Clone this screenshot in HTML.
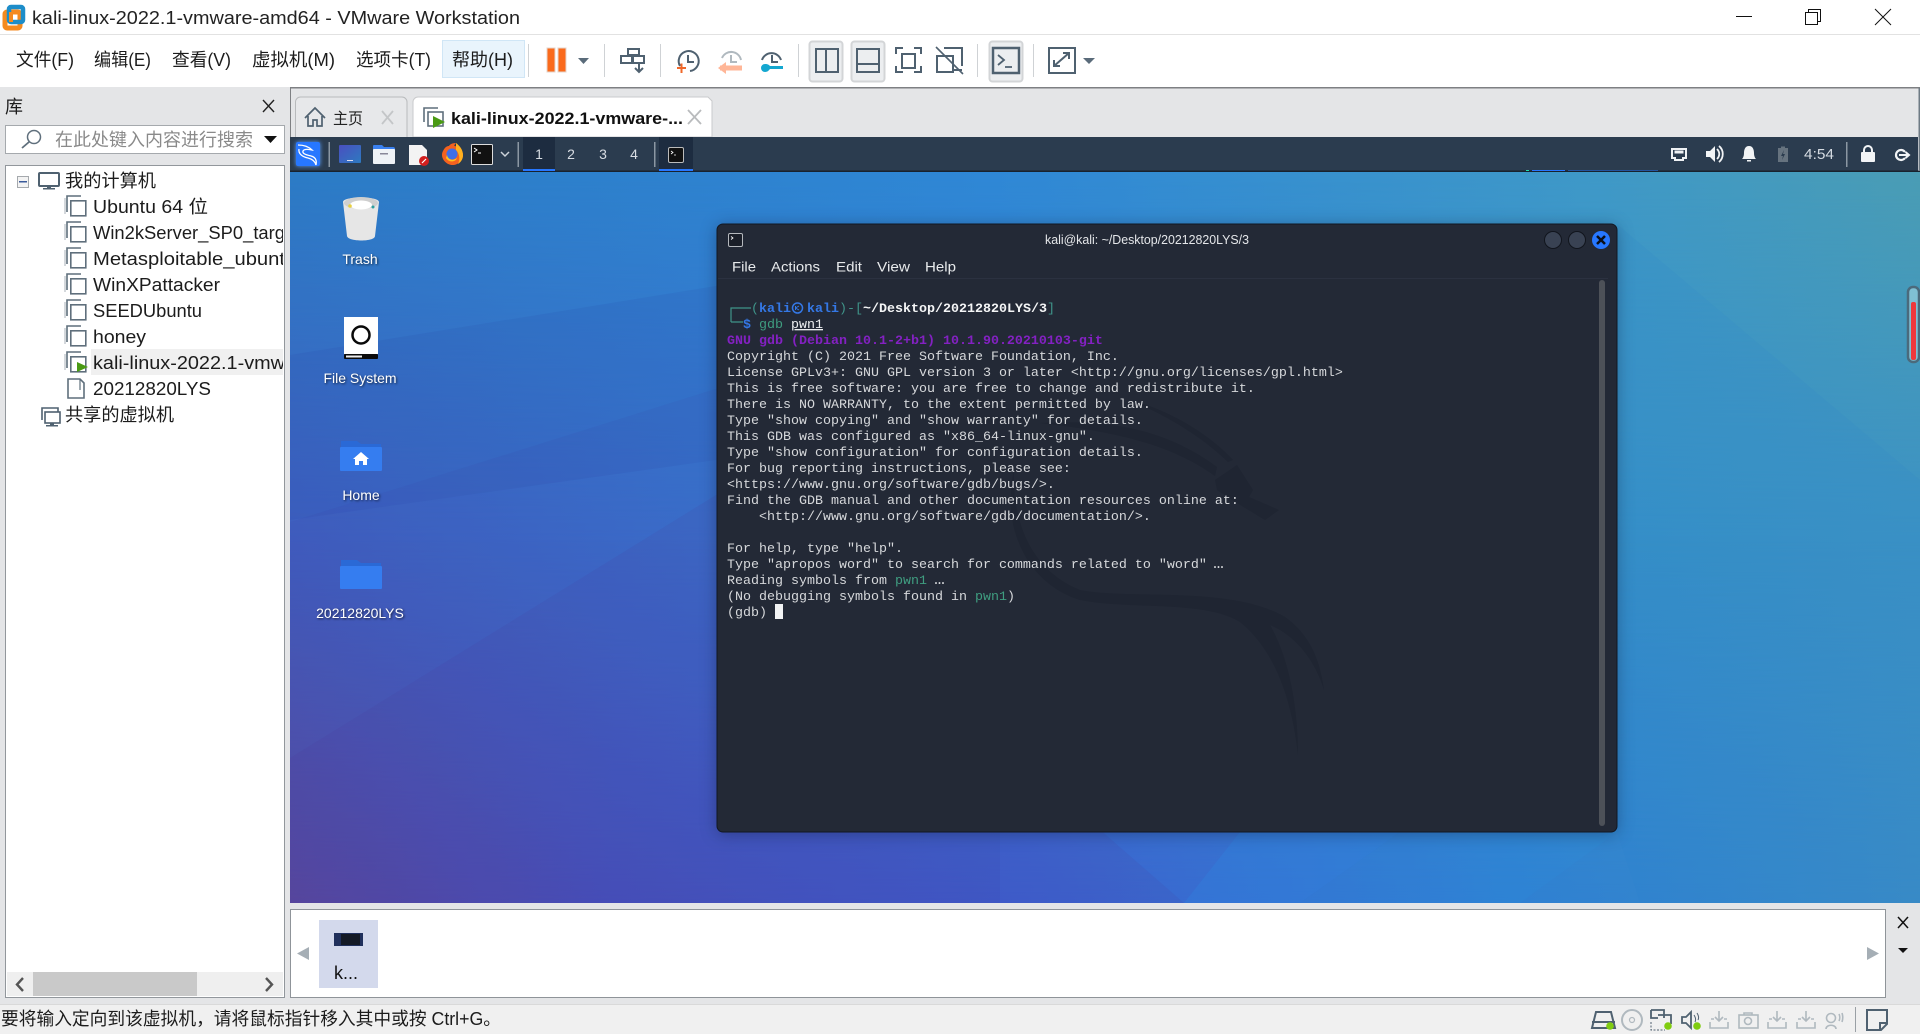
<!DOCTYPE html>
<html><head><meta charset="utf-8"><title>kali-linux-2022.1-vmware-amd64 - VMware Workstation</title>
<style>
html,body{margin:0;padding:0;background:#fff;width:1920px;height:1034px;overflow:hidden}
svg{display:block}
text{font-family:"Liberation Sans","Noto Sans CJK SC",sans-serif;white-space:pre}
.ui{font-size:18px;fill:#1c1c1c}
.t{font-family:"Liberation Mono","DejaVu Sans Mono",monospace;font-size:13.33px;fill:#d6d8db}
.d{font-size:14px;fill:#fff;text-anchor:middle;filter:drop-shadow(1px 1px 1px rgba(0,0,0,.65))}
.i{fill:none;stroke:#4f6170;stroke-width:2}
.g{fill:none;stroke:#b0b9bf;stroke-width:2}
</style></head><body>
<svg width="1920" height="1034" viewBox="0 0 1920 1034" xmlns="http://www.w3.org/2000/svg">
<defs>
<linearGradient id="r1" gradientUnits="userSpaceOnUse" x1="290" y1="0" x2="1920" y2="0"><stop offset="0" stop-color="#2c7cc6"/><stop offset=".43" stop-color="#2f88d6"/><stop offset=".8" stop-color="#3f99c8"/><stop offset="1" stop-color="#4a9db5"/></linearGradient>
<linearGradient id="r2" gradientUnits="userSpaceOnUse" x1="290" y1="0" x2="1920" y2="0"><stop offset="0" stop-color="#3f5fc0"/><stop offset=".25" stop-color="#3a70cc"/><stop offset=".8" stop-color="#3690c8"/><stop offset="1" stop-color="#3c92c4"/></linearGradient>
<linearGradient id="r3" gradientUnits="userSpaceOnUse" x1="290" y1="0" x2="1920" y2="0"><stop offset="0" stop-color="#594a9f"/><stop offset=".2" stop-color="#4654bf"/><stop offset=".45" stop-color="#3d60cf"/><stop offset=".75" stop-color="#2f80d2"/><stop offset="1" stop-color="#3a8cc6"/></linearGradient>
<linearGradient id="m2" gradientUnits="userSpaceOnUse" x1="0" y1="171" x2="0" y2="540"><stop offset="0" stop-color="#000"/><stop offset="1" stop-color="#fff"/></linearGradient>
<linearGradient id="m3" gradientUnits="userSpaceOnUse" x1="0" y1="540" x2="0" y2="903"><stop offset="0" stop-color="#000"/><stop offset="1" stop-color="#fff"/></linearGradient>
<mask id="mk2"><rect x="290" y="171" width="1630" height="732" fill="url(#m2)"/></mask>
<mask id="mk3"><rect x="290" y="171" width="1630" height="732" fill="url(#m3)"/></mask>
<linearGradient id="wk" x1="0" y1="0" x2="1" y2="1"><stop offset="0" stop-color="#4a4fc0"/><stop offset="1" stop-color="#2d7ac0"/></linearGradient>
<clipPath id="treeclip"><rect x="6" y="166" width="277" height="806"/></clipPath>
<clipPath id="vmclip"><rect x="290" y="171" width="1630" height="732"/></clipPath>
<g id="vm"><path d="M67 212V196H81" fill="none" stroke="#5f6f7c" stroke-width="1.6"/><path d="M65 214V198" fill="none" stroke="#a9b2b9" stroke-width="1"/><rect x="70.8" y="200.8" width="15" height="15" fill="#fff" stroke="#5f6f7c" stroke-width="1.6"/></g>
</defs>

<rect width="1920" height="1034" fill="#fff"/>

<!-- title bar -->
<rect x="5" y="12" width="15" height="16" rx="2" fill="none" stroke="#f58a1f" stroke-width="5"/>
<rect x="9" y="7" width="14" height="15" rx="2" fill="none" stroke="#1d8dc9" stroke-width="4.5"/>
<rect x="9" y="12" width="4" height="10" fill="#f58a1f"/>
<text x="32" y="24" style="font-size:18.5px;fill:#222" textLength="488" lengthAdjust="spacingAndGlyphs">kali-linux-2022.1-vmware-amd64 - VMware Workstation</text>
<rect x="1736" y="16" width="16" height="1" fill="#111"/>
<path d="M1808.5 12.500V9.500H1820.500V21.500H1817.500" fill="none" stroke="#111"/><rect x="1805.500" y="12.500" width="12" height="12" fill="none" stroke="#111"/>
<path d="M1875 9L1891 25M1891 9L1875 25" stroke="#111" fill="none"/>
<rect x="0" y="34" width="1920" height="1" fill="#e2e2e2"/>

<!-- menu -->
<rect x="442.500" y="40.500" width="82" height="37" fill="#e9f4fc" stroke="#d0e6f6"/>
<text class="ui" x="16" y="66" textLength="58" lengthAdjust="spacingAndGlyphs">文件(F)</text>
<text class="ui" x="94" y="66" textLength="57" lengthAdjust="spacingAndGlyphs">编辑(E)</text>
<text class="ui" x="172" y="66" textLength="59" lengthAdjust="spacingAndGlyphs">查看(V)</text>
<text class="ui" x="252" y="66" textLength="83" lengthAdjust="spacingAndGlyphs">虚拟机(M)</text>
<text class="ui" x="356" y="66" textLength="75" lengthAdjust="spacingAndGlyphs">选项卡(T)</text>
<text class="ui" x="452" y="66" textLength="61" lengthAdjust="spacingAndGlyphs">帮助(H)</text>

<!-- toolbar -->
<g fill="#cfd2d5"><rect x="528" y="44" width="1" height="33"/><rect x="604" y="44" width="1" height="33"/><rect x="660" y="44" width="1" height="33"/><rect x="798" y="44" width="1" height="33"/><rect x="977" y="44" width="1" height="33"/><rect x="1033" y="44" width="1" height="33"/></g>
<rect x="547" y="48" width="8" height="24" fill="#fa6a1c" stroke="#e4d5cc"/><rect x="558" y="48" width="8" height="24" fill="#fa6a1c" stroke="#e4d5cc"/>
<path d="M578 58H589L583.500 64Z" fill="#5a6b7a"/>
<g class="i"><rect x="628" y="49" width="11" height="6"/><rect x="621" y="56" width="11" height="7"/><rect x="633" y="56" width="11" height="7"/><path d="M639 63V72M635 68L639 72L643 68"/></g>
<g><path d="M680 66A10 10 0 1 1 690 71" class="i"/><path d="M688 55V62H694" class="i"/><path d="M677 68H686M681.500 63.500V73" stroke="#f0682a" stroke-width="2" fill="none"/></g>
<g><path d="M722 58A10 10 0 0 1 741 60" class="g"/><path d="M731 55V62H737" class="g"/><path d="M720 68H742" stroke="#ffb697" stroke-width="5" fill="none"/><path d="M718 68L726 62V74Z" fill="#ffb697"/></g>
<g><path d="M762 60A10 10 0 0 1 781 60" class="i"/><path d="M772 55V62H778" class="i"/><path d="M765 64a4 4 0 0 0 0 8c3 0 4-2 5-3h13v-3h-13c-1-1-2-2-5-2z" fill="#14a7d0"/></g>
<rect x="809.500" y="41.500" width="33" height="40" rx="3" fill="#eceef0" stroke="#d3d5d7" stroke-width="2"/>
<rect x="851.500" y="41.500" width="33" height="40" rx="3" fill="#eceef0" stroke="#d3d5d7" stroke-width="2"/>
<rect x="989.500" y="41.500" width="33" height="40" rx="3" fill="#eceef0" stroke="#d3d5d7" stroke-width="2"/>
<g class="i"><rect x="816" y="49" width="22" height="23"/><path d="M826 49V72"/><rect x="857" y="49" width="22" height="23"/><path d="M857 64H879"/>
<path d="M896 54V48H903M914 48H921V54M921 66V72H914M903 72H896V66"/><rect x="902" y="54" width="13" height="14"/>
<path d="M944 48H962V66M962 70H952M944 48M937 56H953V72H937Z"/><rect x="993" y="48" width="26" height="25" stroke-width="2.500"/><path d="M998 55L1004 60L998 65M1005 67H1012" stroke-width="1.800"/>
<path d="M1054 48H1075V73H1049V48H1054M1054 66L1069 53M1063 53H1069V59M1054 60V66H1060" stroke-width="2"/></g>
<path d="M936 47L963 74" stroke="#4f6170" stroke-width="1.600"/>
<path d="M1083 58H1095L1089 64Z" fill="#5a6b7a"/>

<!-- left panel -->
<rect x="0" y="87" width="290" height="917" fill="#e4e5e7"/>
<text class="ui" x="5" y="113">库</text>
<path d="M263 100L274 112M274 100L263 112" stroke="#222" stroke-width="1.400"/>
<rect x="5.500" y="125.500" width="279" height="28" fill="#fff" stroke="#a5a9ad"/>
<circle cx="34" cy="137" r="6.500" fill="none" stroke="#5f6f7c" stroke-width="1.500"/><path d="M29 142L22 148" stroke="#5f6f7c" stroke-width="1.800"/>
<text x="55" y="146" style="font-size:18px;fill:#8a8a8a" textLength="198" lengthAdjust="spacingAndGlyphs">在此处键入内容进行搜索</text>
<path d="M264 136H277L270.500 143Z" fill="#111"/>
<rect x="5.500" y="165.500" width="279" height="832" fill="#fff" stroke="#92979c"/>
<rect x="17.500" y="176.500" width="11" height="11" fill="#f3f3f3" stroke="#a5a9ad"/><rect x="19" y="181" width="8" height="1.500" fill="#3a5a9a"/>
<g class="i"><rect x="39" y="173" width="20" height="13" rx="1"/></g><rect x="47" y="186" width="4" height="3" fill="#4f6170"/><rect x="43" y="188" width="12" height="1.500" fill="#4f6170"/>
<text class="ui" x="65" y="187" textLength="91" lengthAdjust="spacingAndGlyphs">我的计算机</text>
<rect x="91" y="349" width="192" height="26" fill="#f0f0f0"/>
<use href="#vm"/><use href="#vm" y="26"/><use href="#vm" y="52"/><use href="#vm" y="78"/><use href="#vm" y="104"/><use href="#vm" y="130"/><use href="#vm" y="156"/>
<path d="M77 362L88 367L77 372Z" fill="#4a9a14"/>
<path d="M68 379H80L84 383V398H68Z" fill="#fff" stroke="#5f6f7c" stroke-width="1.600"/><path d="M80 379V390" stroke="#5f6f7c" stroke-width="1.200"/>
<g clip-path="url(#treeclip)">
<text class="ui" x="93" y="213" textLength="115" lengthAdjust="spacingAndGlyphs">Ubuntu 64 位</text>
<text class="ui" x="93" y="239" textLength="192" lengthAdjust="spacingAndGlyphs">Win2kServer_SP0_targ</text>
<text class="ui" x="93" y="265" textLength="192" lengthAdjust="spacingAndGlyphs">Metasploitable_ubunt</text>
<text class="ui" x="93" y="291" textLength="127" lengthAdjust="spacingAndGlyphs">WinXPattacker</text>
<text class="ui" x="93" y="317" textLength="109" lengthAdjust="spacingAndGlyphs">SEEDUbuntu</text>
<text class="ui" x="93" y="343" textLength="53" lengthAdjust="spacingAndGlyphs">honey</text>
<text class="ui" x="93" y="369" textLength="192" lengthAdjust="spacingAndGlyphs">kali-linux-2022.1-vmw</text>
<text class="ui" x="93" y="395" textLength="118" lengthAdjust="spacingAndGlyphs">20212820LYS</text>
</g>
<g class="i"><path d="M42 420V408H58V412" stroke-width="1.600"/><rect x="45" y="412" width="15" height="11" stroke-width="1.600"/></g><rect x="50" y="423" width="4" height="3" fill="#4f6170"/><rect x="46" y="425" width="12" height="1.500" fill="#4f6170"/>
<text class="ui" x="65" y="421" textLength="109" lengthAdjust="spacingAndGlyphs">共享的虚拟机</text>
<rect x="7" y="972" width="276" height="24" fill="#efefef"/><rect x="33" y="972" width="164" height="24" fill="#c9c9c9"/>
<path d="M23 978L17 984.500L23 991" fill="none" stroke="#555" stroke-width="2.400"/><path d="M266 978L272 984.500L266 991" fill="none" stroke="#555" stroke-width="2.400"/>

<!-- tabs area -->
<rect x="290" y="87" width="1630" height="50" fill="#e4e5e7"/>
<rect x="290" y="87" width="1630" height="1.500" fill="#7e8083"/><rect x="290" y="87" width="1" height="50" fill="#7e8083"/>
<path d="M295.500 137V102a5 5 0 0 1 5-5H402a5 5 0 0 1 5 5V137" fill="#e7e8ea" stroke="#b8babc"/>
<path d="M305 118L315 108L325 118M308 116V126H313V120H317V126H322V116" fill="none" stroke="#4f6170" stroke-width="1.700"/>
<text x="333" y="124" style="font-size:16px;fill:#222" textLength="30" lengthAdjust="spacingAndGlyphs">主页</text>
<path d="M382 111L393 124M393 111L382 124" stroke="#c4c6c8" stroke-width="1.800"/>
<path d="M413 137V102a5 5 0 0 1 5-5H708l4 4V137Z" fill="#fff" stroke="#c9cacc"/>
<path d="M424 122V108H438" fill="none" stroke="#5f6f7c" stroke-width="1.600"/><rect x="428" y="112" width="15" height="14" fill="#fff" stroke="#5f6f7c" stroke-width="1.600"/><path d="M433 116L445 122L433 128Z" fill="#4a9a14"/>
<text x="451" y="124" style="font-size:17px;font-weight:bold;fill:#111" textLength="232" lengthAdjust="spacingAndGlyphs">kali-linux-2022.1-vmware-...</text>
<path d="M688 110L701 124M701 110L688 124" stroke="#b9bbbd" stroke-width="1.800"/>

<!-- wallpaper -->
<rect x="290" y="171" width="1630" height="732" fill="url(#r1)"/>
<rect x="290" y="171" width="1630" height="732" fill="url(#r2)" mask="url(#mk2)"/>
<rect x="290" y="171" width="1630" height="732" fill="url(#r3)" mask="url(#mk3)"/>
<g clip-path="url(#vmclip)">
<path d="M290 355L1000 240L1000 420L290 520Z" fill="#2a3fa0" opacity=".10"/>
<path d="M290 522L1000 300V903H290Z" fill="#3a2f98" opacity=".08"/>
<path d="M290 758L716 495L1184 903H290Z" fill="#4a2f90" opacity=".10"/>
<path d="M1184 903L1240 832H1400L1300 903Z" fill="#2f88e0" opacity=".30"/>
<path d="M1300 903L1400 832H1617L1520 903Z" fill="#2f90e0" opacity=".18"/>
<path d="M1617 224L1920 480V903H1640L1617 832Z" fill="#2a80d0" opacity=".10"/>
</g>

<!-- kali panel -->
<rect x="290" y="137" width="1628" height="34" fill="#2b3c4f"/><rect x="290" y="170.500" width="1630" height="1.500" fill="#18222e"/>
<rect x="296" y="142" width="24" height="24" rx="2" fill="#2777ff" style="filter:drop-shadow(0 0 2px #5aa0ff)"/>
<path d="M298 145C303 145 308 146 312 150C307 149 304 149 303 151C302 154 307 155 311 156C315 157 317 160 316 165C315 161 312 159 308 158C303 157 298 154 299 149" fill="none" stroke="#fff" stroke-width="1.300"/>
<rect x="328.500" y="142" width="1.500" height="25" fill="#8b97a3"/>
<rect x="339" y="145" width="22" height="18" rx="1" fill="url(#wk)"/><rect x="347" y="160" width="6" height="1" fill="#dde"/>
<path d="M373 146a1 1 0 0 1 1-1h8l2 2h9a2 2 0 0 1 2 2v2H373Z" fill="#3a80ef"/><rect x="373" y="149" width="22" height="15" rx="1" fill="#eef2f6"/><rect x="380" y="153" width="8" height="1.500" fill="#889"/>
<path d="M409 145H422L427 150V165H409Z" fill="#f3f3f3"/><circle cx="424" cy="161" r="5" fill="#d21f1f"/><path d="M422 163L426 159" stroke="#fff" stroke-width="1.200"/>
<path d="M443 151C445 147 447 146 449 146C450 144 453 143 456 143C454 145 454 146 455 146C459 147 463 151 463 155C463 161 458 165 452.500 165C447 165 442 160 442 155C442 153 442.500 152 443 151Z" fill="#f4621f"/><path d="M456 143C460 146 463 150 463 155C463 159 461 162 458 164C460 160 460 154 456 150Z" fill="#ffb01f"/><circle cx="452" cy="154" r="5.500" fill="#3f6fe8"/><path d="M447 155C448 160 453 161 457 158C456 162 449 163 446 158Z" fill="#ffc21f"/>
<rect x="471.500" y="144.500" width="21" height="20" rx="1" fill="#111" stroke="#ddd"/><path d="M474 148L477 150L474 152M478 153H481" stroke="#fff" fill="none"/>
<path d="M501 152L505 156L509 152" fill="none" stroke="#cdd3da" stroke-width="1.500"/>
<rect x="517.500" y="142" width="1.500" height="25" fill="#8b97a3"/>
<rect x="523" y="137" width="32" height="33.500" fill="#1d2c40"/><rect x="523" y="169" width="32" height="2" fill="#2777ff"/>
<g style="font-size:14px;fill:#d8dde3;text-anchor:middle"><text x="539" y="159" style="text-anchor:middle">1</text><text x="571" y="159" style="text-anchor:middle">2</text><text x="603" y="159" style="text-anchor:middle">3</text><text x="634" y="159" style="text-anchor:middle">4</text></g>
<rect x="654" y="142" width="1.500" height="25" fill="#8b97a3"/>
<rect x="659" y="137" width="34" height="33.500" fill="#1d2c40"/><rect x="659" y="169" width="34" height="2" fill="#2777ff"/>
<rect x="668.500" y="147.500" width="15" height="15" rx="1.500" fill="#111" stroke="#bbb"/><path d="M671 151L673 152.500L671 154M674 155H676" stroke="#fff" fill="none" stroke-width=".8"/>
<g fill="none" stroke="#eef1f4"><path d="M1672 149H1686V158H1683V160H1675V158H1672Z" stroke-width="2"/></g><rect x="1674.500" y="150.500" width="9" height="3" fill="#eef1f4"/>
<path d="M1706 151H1710L1715 146V162L1710 157H1706Z" fill="#f2f4f6"/><path d="M1717 149C1720 152 1720 156 1717 159M1719 146C1724 150 1724 158 1719 162" fill="none" stroke="#f2f4f6" stroke-width="1.800"/>
<path d="M1749 146C1753 146 1754 150 1754 153C1754 156 1755 158 1756 159H1742C1743 158 1744 156 1744 153C1744 150 1745 146 1749 146Z" fill="#f2f4f6"/><rect x="1747" y="160" width="4" height="1.500" fill="#f2f4f6"/>
<rect x="1778" y="148" width="10" height="14" fill="#66737f"/><rect x="1781" y="146.500" width="4" height="2" fill="#66737f"/><path d="M1784 150L1781 156H1783L1782 160L1785 154H1783Z" fill="#2b3c4f"/>
<text x="1804" y="159" style="font-size:14.500px;fill:#d5dbe2" textLength="30" lengthAdjust="spacingAndGlyphs">4:54</text>
<rect x="1846" y="142" width="1.500" height="25" fill="#8b97a3"/>
<path d="M1864 153V150a4 4 0 0 1 8 0V153" fill="none" stroke="#f2f4f6" stroke-width="2"/><rect x="1861" y="152" width="14" height="10" rx="1" fill="#f2f4f6"/>
<path d="M1905 152A5 5 0 1 0 1905 158" fill="none" stroke="#f2f4f6" stroke-width="2.200"/><path d="M1899 155H1909M1905.500 152L1909 155L1905.500 158" fill="none" stroke="#f2f4f6" stroke-width="2"/>
<rect x="1526" y="170" width="3" height="1" fill="#1fe0b0"/><rect x="1532" y="170" width="33" height="1" fill="#2777ff"/><rect x="1568" y="170" width="90" height="1" fill="#2777ff" opacity=".5"/>
<rect x="1918.500" y="88" width="1.500" height="83" fill="#6e7a84"/>

<!-- red scrollbar thing -->
<rect x="1908" y="287" width="11" height="75" rx="5" fill="#7fc0d4" stroke="#4b6a7c" stroke-width="2.500"/>
<rect x="1911" y="302" width="5" height="58" rx="2" fill="#f0383c"/>

<!-- desktop icons -->
<path d="M343 202C343 196 379 196 379 202L375 236C375 242 348 242 347 236Z" fill="#e6e6e6"/>
<ellipse cx="361" cy="203" rx="17" ry="6" fill="#cfcfcf"/><ellipse cx="361" cy="205" rx="11" ry="4.500" fill="#fff"/><circle cx="350" cy="206" r="1.800" fill="#e8d040"/><circle cx="373" cy="207" r="1.500" fill="#30a0a0"/>
<text class="d" x="360" y="264">Trash</text>
<rect x="344" y="317" width="34" height="37" fill="#fff"/><rect x="344" y="354" width="34" height="5" rx="1" fill="#0b0b0b"/><rect x="346" y="355.500" width="16" height="2" fill="#eee"/><circle cx="361" cy="335" r="8.500" fill="none" stroke="#0a0a0a" stroke-width="2.500"/>
<text class="d" x="360" y="383">File System</text>
<path d="M341 441h16l4 3h20v8H341Z" fill="#2a69d6"/><rect x="340" y="447" width="42" height="24" rx="1" fill="#357df0"/>
<path d="M361 452L369 459H367V465H363V461H359V465H355V459H353Z" fill="#fff"/>
<text class="d" x="361" y="500">Home</text>
<path d="M341 560h16l4 3h20v8H341Z" fill="#2a69d6"/><rect x="340" y="566" width="42" height="23" rx="1" fill="#357df0"/>
<text class="d" x="360" y="618">20212820LYS</text>

<!-- terminal -->
<rect x="717" y="224" width="900" height="608" rx="6" fill="#232936" stroke="#121823" style="filter:drop-shadow(0 2px 8px rgba(10,20,50,.35))"/>
<g fill="#1f2532">
<path d="M1040 423C1100 420 1160 425 1217 467L1215 476C1165 440 1100 430 1040 423Z"/>
<path d="M1130 400C1170 410 1210 435 1233 460L1228 462C1200 435 1165 415 1130 400Z"/>
<path d="M1215 480L1237 465L1253 490L1249 497L1279 510L1265 520L1237 503L1217 490Z"/>
<path d="M1014 470C1012 520 1030 570 1080 590C1130 600 1230 585 1285 617C1310 635 1320 660 1324 690C1315 660 1295 635 1270 625C1290 660 1298 710 1298 755C1292 700 1275 650 1240 622C1205 600 1130 610 1080 600C1030 585 1000 530 1014 470Z"/>
</g>
<rect x="728.500" y="233.500" width="14" height="13" rx="1.500" fill="#1a1e28" stroke="#b5b8bd"/><path d="M731 236.500L733 238L731 239.500" stroke="#fff" fill="none" stroke-width=".8"/>
<text x="1045" y="244" style="font-size:12.500px;fill:#e4e6e9" textLength="204" lengthAdjust="spacingAndGlyphs">kali@kali: ~/Desktop/20212820LYS/3</text>
<circle cx="1553" cy="240" r="8.500" fill="#394253" stroke="#11151d"/><circle cx="1577" cy="240" r="8.500" fill="#394253" stroke="#11151d"/><circle cx="1601" cy="240" r="9" fill="#2777ff"/><path d="M1597 236L1605 244M1605 236L1597 244" stroke="#0b0f18" stroke-width="2.500"/>
<g style="font-size:14px;fill:#e8eaec"><text x="732" y="271.500" textLength="24" lengthAdjust="spacingAndGlyphs">File</text><text x="771" y="271.500" textLength="49" lengthAdjust="spacingAndGlyphs">Actions</text><text x="836" y="271.500" textLength="26" lengthAdjust="spacingAndGlyphs">Edit</text><text x="877" y="271.500" textLength="33" lengthAdjust="spacingAndGlyphs">View</text><text x="925" y="271.500" textLength="31" lengthAdjust="spacingAndGlyphs">Help</text></g>
<rect x="718" y="278" width="890" height="1" fill="#2b3140"/>
<rect x="1599" y="280" width="6" height="546" rx="3" fill="#4d5158"/>

<path d="M731 322V308H751M731 322H743" fill="none" stroke="#3f9489" stroke-width="1.200"/>
<text class="t" y="312"><tspan x="751" style="fill:#3f9489">(</tspan><tspan x="759" style="fill:#3478e6;font-weight:bold">kali</tspan><tspan x="807" style="fill:#3478e6;font-weight:bold">kali</tspan><tspan x="839" style="fill:#3f9489">)-[</tspan><tspan x="863" style="fill:#f4f5f6;font-weight:bold">~/Desktop/20212820LYS/3</tspan><tspan x="1047" style="fill:#3f9489">]</tspan></text>
<circle cx="797.500" cy="308" r="5" fill="none" stroke="#3478e6" stroke-width="1.500"/><path d="M795.500 306V310M795.500 308L799 306M795.500 308L799 310" stroke="#3478e6" fill="none"/>
<text class="t" y="328"><tspan x="743" style="fill:#3478e6;font-weight:bold">$</tspan><tspan x="759" style="fill:#3f9d80">gdb</tspan><tspan x="791" style="fill:#eceef0;text-decoration:underline">pwn1</tspan></text>
<text class="t" x="727" y="344" style="fill:#8321c2;font-weight:bold">GNU gdb (Debian 10.1-2+b1) 10.1.90.20210103-git</text>
<text class="t" x="727" y="360">Copyright (C) 2021 Free Software Foundation, Inc.</text>
<text class="t" x="727" y="376">License GPLv3+: GNU GPL version 3 or later &lt;http://gnu.org/licenses/gpl.html&gt;</text>
<text class="t" x="727" y="392">This is free software: you are free to change and redistribute it.</text>
<text class="t" x="727" y="408">There is NO WARRANTY, to the extent permitted by law.</text>
<text class="t" x="727" y="424">Type "show copying" and "show warranty" for details.</text>
<text class="t" x="727" y="440">This GDB was configured as "x86_64-linux-gnu".</text>
<text class="t" x="727" y="456">Type "show configuration" for configuration details.</text>
<text class="t" x="727" y="472">For bug reporting instructions, please see:</text>
<text class="t" x="727" y="488">&lt;https://www.gnu.org/software/gdb/bugs/&gt;.</text>
<text class="t" x="727" y="504">Find the GDB manual and other documentation resources online at:</text>
<text class="t" x="759" y="520">&lt;http://www.gnu.org/software/gdb/documentation/&gt;.</text>
<text class="t" x="727" y="552">For help, type "help".</text>
<text class="t" y="568"><tspan x="727">Type "apropos word" to search for commands related to "word"</tspan><tspan x="1211" textLength="15">...</tspan></text>
<text class="t" y="584"><tspan x="727">Reading symbols from </tspan><tspan x="895" style="fill:#3f9d80">pwn1</tspan><tspan x="932" textLength="15">...</tspan></text>
<text class="t" y="600"><tspan x="727">(No debugging symbols found in </tspan><tspan x="975" style="fill:#3f9d80">pwn1</tspan><tspan x="1007">)</tspan></text>
<text class="t" x="727" y="616">(gdb) </text>
<rect x="775" y="604" width="8" height="15" fill="#f2f3f4"/>

<!-- bottom pane -->
<rect x="290" y="903" width="1630" height="101" fill="#e4e5e7"/>
<rect x="290.500" y="909.500" width="1595" height="88" fill="#fff" stroke="#8f9499"/>
<path d="M309 947V960L297 953.500Z" fill="#a5aeb5"/>
<path d="M1867 947V960L1879 953.500Z" fill="#a5aeb5"/>
<rect x="319" y="920" width="59" height="68" fill="#d3d9ec"/>
<rect x="334" y="933" width="29" height="13" fill="#20305c"/><rect x="341" y="934" width="19" height="11" fill="#141a26"/>
<text x="334" y="979" style="font-size:18px;fill:#111">k...</text>
<path d="M1898 917L1908 928M1908 917L1898 928" stroke="#111" stroke-width="1.500"/>
<path d="M1898 948H1908L1903 953Z" fill="#111"/>

<!-- status bar -->
<rect x="0" y="1004" width="1920" height="30" fill="#f0f0f0"/><rect x="0" y="1004" width="1920" height="1" fill="#d9d9d9"/>
<text x="1" y="1025" style="font-size:18px;fill:#1c1c1c" textLength="500" lengthAdjust="spacingAndGlyphs">要将输入定向到该虚拟机，请将鼠标指针移入其中或按 Ctrl+G。</text>
<path d="M1596 1012H1611L1615 1028H1592ZM1592 1022H1615" fill="none" stroke="#4f6170" stroke-width="2"/><circle cx="1610" cy="1026" r="3.800" fill="#80cc10"/>
<circle cx="1632" cy="1020" r="10" class="g"/><circle cx="1632" cy="1020" r="2.500" class="g" style="stroke-width:1.200"/>
<path d="M1651 1010H1664V1018M1658 1015H1671V1024M1651 1010V1018H1658" fill="none" stroke="#4f6170" stroke-width="1.800"/><path d="M1651 1022V1030H1665" fill="none" stroke="#4f6170" stroke-width="1" stroke-dasharray="2 1.500"/><circle cx="1668" cy="1026" r="3.800" fill="#80cc10"/>
<path d="M1682 1017H1686L1691 1012V1028L1686 1023H1682Z" fill="none" stroke="#4f6170" stroke-width="1.800"/><path d="M1694 1015C1696 1018 1696 1020 1695 1022M1697 1013C1699 1016 1699 1018 1698 1020" fill="none" stroke="#4f6170"/><circle cx="1697" cy="1026" r="3.800" fill="#80cc10"/>
<g class="g" style="stroke-width:1.600"><path d="M1719 1011V1021M1715 1017L1719 1021L1723 1017M1710 1022V1028H1728V1022M1711 1019H1714M1724 1019H1727"/><rect x="1739" y="1015" width="19" height="13"/><circle cx="1748" cy="1021" r="3.500"/><path d="M1744 1015V1013H1752V1015"/><path d="M1777 1011V1021M1773 1017L1777 1021L1781 1017M1768 1022V1028H1786V1022M1769 1019H1772M1782 1019H1785"/><path d="M1806 1011V1021M1802 1017L1806 1021L1810 1017M1797 1022V1028H1815V1022M1798 1019H1801M1811 1019H1814"/><circle cx="1831" cy="1018" r="4.500"/><path d="M1826 1029C1826 1024 1836 1024 1836 1029M1839 1014C1840 1016 1840 1019 1839 1021M1842 1013C1843 1016 1843 1019 1842 1022"/></g>
<rect x="1855" y="1007" width="1" height="25" fill="#9aa0a5"/>
<path d="M1867 1010H1887V1024L1881 1030H1867ZM1887 1023H1880V1030" fill="none" stroke="#4f6170" stroke-width="2"/>
</svg>
</body></html>
